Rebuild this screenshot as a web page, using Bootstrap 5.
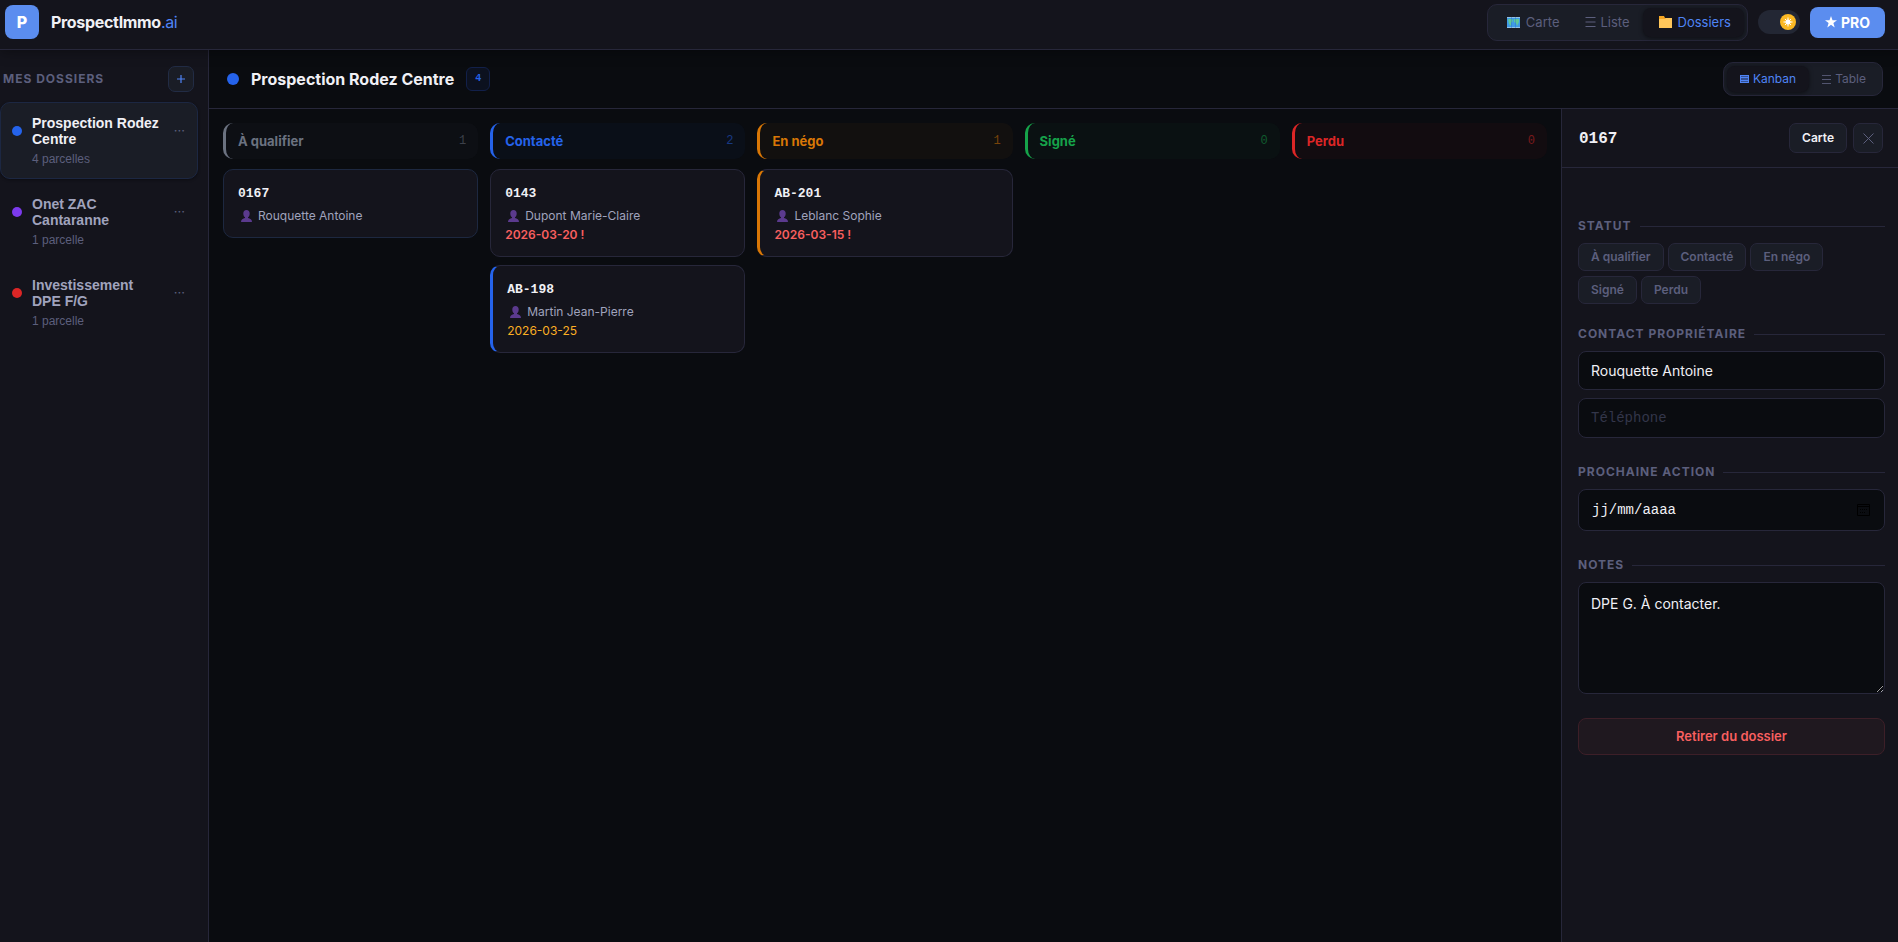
<!DOCTYPE html>
<html lang="fr">
<head>
<meta charset="utf-8">
<meta name="viewport" content="width=device-width, initial-scale=1">
<title>ProspectImmo.ai – Dossiers</title>
<link rel="stylesheet" href="https://cdn.jsdelivr.net/npm/bootstrap@5.3.0/dist/css/bootstrap.min.css">
<style>
:root{--bg:#0a0c10;--panel:#14141c;--raised:#1a1d26;--line:#27273a;--txt:#f0f0f5;--soft:#a0a3bd;--dim:#5c5f7d;--accent:#4f84f5;--mono:"Liberation Mono",monospace;--arial:"Liberation Sans",Arial,sans-serif}
body{background:var(--bg);color:var(--txt);font-family:Inter,sans-serif;font-size:13px;line-height:19px}
button,.btn{font-family:inherit}
.topbar{background:var(--panel);border-bottom:1px solid var(--line);height:50px;padding:0 13px 5px 5px;box-shadow:0 2px 12px rgba(0,0,0,.35);position:relative;z-index:2}
.logo{width:34px;height:34px;border-radius:8px;background:#5b8def;color:#fff;font-size:16px;font-weight:800}
.brandname{font-size:16px;font-weight:700;letter-spacing:-.02em;color:var(--txt);text-decoration:none}
.brandname span{color:var(--accent);font-weight:400}
.seg{background:var(--raised);border:1px solid var(--line);border-radius:10px;padding:3px}
.seg .btn{color:var(--dim);font-size:13px;line-height:19px;border:0;border-radius:8px;padding:5px 13px}
.seg .btn.active{background:var(--panel);color:var(--accent);box-shadow:0 1px 4px rgba(0,0,0,.5)}
.seg-sm .btn{font-size:12px;line-height:18px;padding:4px 13px}
.emoji{margin:0 6px 0 3px}
.tools{gap:10px}
.switcher{width:42px;height:24px;border-radius:12px;background:#232734;border:0;padding:4px;display:flex;justify-content:flex-end}
.pro,.pro:hover{background:#5b8def;color:#fff;border:0}
.pro{font-weight:700;font-size:14px;line-height:19px;border-radius:8px;padding:6px 15px}
.side{width:209px;background:var(--panel);border-right:1px solid var(--line)}
.side-head{padding:16px 14px 10px 3px}
.caps{font-size:12px;line-height:18px;font-weight:700;letter-spacing:1px;color:var(--dim);text-transform:uppercase;margin:0}
.add{width:26px;height:26px;background:var(--raised);border:1px solid #222c45;border-radius:7px;color:var(--accent);padding:0}
.folders{margin-right:10px}
.folder{border:1px solid transparent;border-radius:10px;padding:12px 11px;gap:10px;color:var(--soft)}
.folder.current{background:var(--raised);border-color:#1c2742;color:var(--txt);box-shadow:0 1px 3px rgba(0,0,0,.4)}
.folder-name{font:700 14px/16px var(--arial);color:inherit;text-decoration:none;display:block}
.folder-count{font:12px/14px var(--arial);color:var(--dim);margin-top:5px}
.dots{border:0;background:none;color:var(--dim);padding:0 1px;line-height:19px;margin-top:6px}
.dot{border-radius:50%;width:10px;height:10px;flex:none}
.folder .dot{margin-top:11px}
.dot-lg{width:12px;height:12px}
.head{height:59px;border-bottom:1px solid var(--line);padding:0 15px 0 18px;flex:none}
.head h1{font-size:16px;line-height:24px;font-weight:700;margin:0 0 0 12px}
.count{font:700 10px/22px var(--mono);border:1px solid #12204a;background:#0c111f;color:#2563eb;border-radius:6px;padding:0 8px;margin-left:12px}
.board{display:grid;grid-template-columns:repeat(5,minmax(0,1fr));gap:12px;padding:14px;align-items:start}
.lane{color:var(--c);background:color-mix(in srgb,var(--c) 4%,transparent);border-left:3px solid var(--c);border-radius:10px;height:36px;padding:0 12px;margin-bottom:10px}
.lane h2{font-size:13px;line-height:19px;font-weight:700;margin:0}
.lane span{font:12px/16px var(--mono);opacity:.5}
.parcel{background:var(--panel);border:1px solid var(--line);border-radius:10px;padding:12px 14px;margin-bottom:8px}
.parcel.picked{border-color:#1d2840}
.parcel.edge{border-left:3px solid var(--c)}
.parcel-id{font:700 13px/24px var(--mono)}
.owner{font-size:12px;line-height:19px;color:var(--soft)}
.owner svg{margin:0 5px 0 2px}
.due{font-size:12px;line-height:19px;color:#fbaf24}
.due.late{color:#f85f5f;font-weight:600}
.detail{width:337px;background:var(--panel);border-left:1px solid var(--line)}
.detail .head{padding-left:17px}
.detail-id{font:700 16px/24px var(--mono);margin:2px 0 0}
.soft-btn{background:var(--raised);border:1px solid var(--line);border-radius:7px;color:var(--txt);font:600 12px/18px Inter,sans-serif;padding:5px 12px}
.close-btn{width:30px;height:30px;padding:0;color:var(--dim);margin-left:6px}
.detail-body{padding:49px 13px 16px 16px}
.caps.rule{display:flex;align-items:center;gap:8px;margin-bottom:8px}
.caps.rule::after{content:"";flex:1;height:1px;background:var(--line)}
.chips{gap:5px 4px;margin-bottom:21px}
.chip{background:var(--raised);border:1px solid var(--line);border-radius:7px;color:var(--dim);font:600 12px/18px Inter,sans-serif;padding:4px 12px}
.block-lg{margin-bottom:25px}
.field,.field:focus{background:var(--bg);border:1px solid var(--line);border-radius:8px;color:var(--txt);font-size:14px;line-height:19px;padding:9px 12px;box-shadow:none}
.field.typed,.field.typed:focus{font-family:var(--mono);line-height:20px}
.field::placeholder{color:#33364a}
.field.date{padding:10px 13px}
.field.date::placeholder{color:var(--txt);opacity:1}
.field.notes{height:112px;margin-bottom:24px;padding-top:11px}
.cal{right:15px;top:14px}
.remove{background:#1f181f;border:1px solid #3d1f28;border-radius:8px;color:#f85f5f;font:600 13px/19px Inter,sans-serif;padding:8px}
</style>
</head>
<body class="vh-100 d-flex flex-column overflow-hidden">
<svg width="0" height="0" class="position-absolute" aria-hidden="true">
  <symbol id="person" viewBox="0 0 12 12"><path fill="#5b3a8e" d="M6 0c2 0 3.200 1.300 3.200 3.400C9.200 5.300 8.400 6.800 7.500 7.300v.7c2 .4 4 1.400 4 4H.5c0-2.600 2-3.600 4-4v-.7C3.600 6.800 2.800 5.300 2.800 3.400 2.800 1.300 4 0 6 0z"/></symbol>
  <symbol id="lines" viewBox="0 0 10 10"><path stroke="currentColor" d="M0 .5h10M0 5h10M0 9.500h10"/></symbol>
</svg>

<header class="topbar d-flex align-items-center flex-shrink-0">
  <div class="logo d-flex align-items-center justify-content-center">P</div>
  <a class="brandname ms-2 ps-1" href="#">ProspectImmo<span>.ai</span></a>
  <div class="tools d-flex align-items-center ms-auto">
    <nav class="seg d-flex" aria-label="Vues">
      <button class="btn d-flex align-items-center"><svg class="emoji" width="13" height="11" viewBox="0 0 13 11"><path fill="#3f9be6" d="M0 0h13v11H0z"/><path fill="#5fc79a" d="M1 2h4l1 2-2 2v3L2 7zM7 2h5v3l-2 4-1-3-2-1z"/><path stroke="#b9d3e6" d="M0 .5h13M0 10.500h13" opacity=".7"/><path stroke="#2b6fc0" d="M4.500 0v11M8.500 0v11" opacity=".4"/></svg>Carte</button>
      <button class="btn d-flex align-items-center"><svg class="me-1" width="11" height="10" viewBox="0 0 11 10"><use href="#lines"/></svg>Liste</button>
      <button class="btn active d-flex align-items-center"><svg class="emoji" width="13" height="12" viewBox="0 0 13 12"><path fill="#f5a623" d="M0 0h5l1 2h7v10H0z"/><path fill="#ffc65a" d="M0 3h6l1-1h6v10H0z"/></svg>Dossiers</button>
    </nav>
    <button class="switcher" aria-label="Changer de thème"><svg width="16" height="16" viewBox="0 0 16 16"><circle cx="8" cy="8" r="8" fill="#fbb924"/><circle cx="8" cy="8" r="2.500" fill="#fff"/><path stroke="#fff" d="M8 3.500v9M3.500 8h9M5 5l6 6M11 5l-6 6"/></svg></button>
    <button class="btn pro d-flex align-items-center"><svg class="me-1" width="12" height="12" viewBox="0 0 12 12"><path fill="#fff" d="M6 0l1.500 4.200H12L8.400 6.900 9.700 11.500 6 8.800 2.300 11.500 3.600 6.900 0 4.200h4.500z"/></svg>PRO</button>
  </div>
</header>

<div class="d-flex flex-grow-1 overflow-hidden">
  <aside class="side flex-shrink-0">
    <div class="side-head d-flex align-items-center justify-content-between">
      <h2 class="caps">Mes dossiers</h2>
      <button class="btn add d-flex align-items-center justify-content-center" aria-label="Nouveau dossier"><svg width="8" height="8" viewBox="0 0 8 8"><path stroke="currentColor" stroke-width="1.200" d="M4 0v8M0 4h8"/></svg></button>
    </div>
    <div class="d-flex flex-column gap-1 folders">
      <div class="folder current d-flex align-items-start">
        <span class="dot" style="background:#2563eb"></span>
        <div class="flex-grow-1"><a href="#" class="folder-name">Prospection Rodez Centre</a><div class="folder-count">4 parcelles</div></div>
        <button class="dots" aria-label="Options">···</button>
      </div>
      <div class="folder d-flex align-items-start">
        <span class="dot" style="background:#7c3aed"></span>
        <div class="flex-grow-1"><a href="#" class="folder-name">Onet ZAC<br>Cantaranne</a><div class="folder-count">1 parcelle</div></div>
        <button class="dots" aria-label="Options">···</button>
      </div>
      <div class="folder d-flex align-items-start">
        <span class="dot" style="background:#dc2626"></span>
        <div class="flex-grow-1"><a href="#" class="folder-name">Investissement<br>DPE F/G</a><div class="folder-count">1 parcelle</div></div>
        <button class="dots" aria-label="Options">···</button>
      </div>
    </div>
  </aside>

  <main class="flex-grow-1 d-flex flex-column overflow-hidden">
    <div class="head d-flex align-items-center">
      <span class="dot dot-lg" style="background:#2563eb"></span>
      <h1>Prospection Rodez Centre</h1>
      <span class="count">4</span>
      <div class="seg seg-sm d-flex ms-auto">
        <button class="btn active d-flex align-items-center"><svg class="me-1" width="9" height="8" viewBox="0 0 9 8"><path fill="currentColor" opacity=".55" d="M0 0h9v8H0z"/><path stroke="currentColor" d="M0 .5h9M0 2.500h9M0 5.500h9M0 7.500h9M.5 0v8M8.500 0v8"/></svg>Kanban</button>
        <button class="btn d-flex align-items-center"><svg class="me-1" width="9" height="9"><use href="#lines"/></svg>Table</button>
      </div>
    </div>
    <div class="d-flex flex-grow-1 overflow-hidden">
      <div class="board flex-grow-1">
        <section style="--c:#6b7280">
          <div class="lane d-flex align-items-center justify-content-between"><h2>À qualifier</h2><span>1</span></div>
          <article class="parcel picked"><div class="parcel-id">0167</div><div class="owner d-flex align-items-center"><svg width="13" height="12"><use href="#person"/></svg>Rouquette Antoine</div></article>
        </section>
        <section style="--c:#2563eb">
          <div class="lane d-flex align-items-center justify-content-between"><h2>Contacté</h2><span>2</span></div>
          <article class="parcel"><div class="parcel-id">0143</div><div class="owner d-flex align-items-center"><svg width="13" height="12"><use href="#person"/></svg>Dupont Marie-Claire</div><div class="due late">2026-03-20 !</div></article>
          <article class="parcel edge"><div class="parcel-id">AB-198</div><div class="owner d-flex align-items-center"><svg width="13" height="12"><use href="#person"/></svg>Martin Jean-Pierre</div><div class="due">2026-03-25</div></article>
        </section>
        <section style="--c:#d97706">
          <div class="lane d-flex align-items-center justify-content-between"><h2>En négo</h2><span>1</span></div>
          <article class="parcel edge"><div class="parcel-id">AB-201</div><div class="owner d-flex align-items-center"><svg width="13" height="12"><use href="#person"/></svg>Leblanc Sophie</div><div class="due late">2026-03-15 !</div></article>
        </section>
        <section style="--c:#16a34a">
          <div class="lane d-flex align-items-center justify-content-between"><h2>Signé</h2><span>0</span></div>
        </section>
        <section style="--c:#dc2626">
          <div class="lane d-flex align-items-center justify-content-between"><h2>Perdu</h2><span>0</span></div>
        </section>
      </div>

      <aside class="detail flex-shrink-0">
        <div class="head d-flex align-items-center">
          <h2 class="detail-id me-auto">0167</h2>
          <button class="btn soft-btn">Carte</button>
          <button class="btn soft-btn close-btn d-flex align-items-center justify-content-center" aria-label="Fermer"><svg width="11" height="11" viewBox="0 0 11 11"><path stroke="currentColor" d="M.5.5l10 10M10.500.5l-10 10"/></svg></button>
        </div>
        <div class="detail-body">
          <h3 class="caps rule">Statut</h3>
          <div class="d-flex flex-wrap chips">
            <button class="btn chip">À qualifier</button><button class="btn chip">Contacté</button><button class="btn chip">En négo</button><button class="btn chip">Signé</button><button class="btn chip">Perdu</button>
          </div>
          <h3 class="caps rule">Contact propriétaire</h3>
          <div class="block-lg">
            <input class="form-control field mb-2" type="text" aria-label="Nom du propriétaire" value="Rouquette Antoine">
            <input class="form-control field typed" type="tel" aria-label="Téléphone" placeholder="Téléphone">
          </div>
          <h3 class="caps rule">Prochaine action</h3>
          <div class="block-lg position-relative">
            <input class="form-control field typed date" type="text" aria-label="Date de la prochaine action" placeholder="jj/mm/aaaa">
            <svg class="cal position-absolute" width="13" height="13" viewBox="0 0 13 13"><path fill="none" stroke="#000" d="M.5 1.500h12v11H.5zM.5 3.500h12"/><path stroke="#000" stroke-dasharray="1 1" d="M3 6.500h7M3 9.500h5"/></svg>
          </div>
          <h3 class="caps rule"><label for="notes">Notes</label></h3>
          <textarea id="notes" class="form-control field notes">DPE G. À contacter.</textarea>
          <button class="btn remove w-100">Retirer du dossier</button>
        </div>
      </aside>
    </div>
  </main>
</div>
<script src="https://cdn.jsdelivr.net/npm/bootstrap@5.3.0/dist/js/bootstrap.bundle.min.js"></script>
</body>
</html>
